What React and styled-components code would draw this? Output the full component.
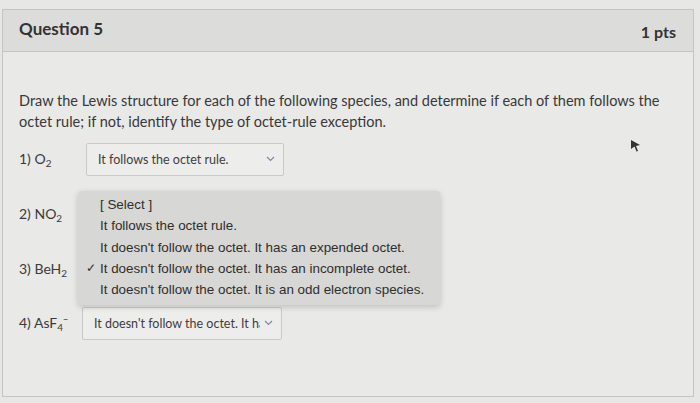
import React from "react";
import styled, { createGlobalStyle } from "styled-components";

const Global = createGlobalStyle`
  html, body {
    margin: 0;
    background: #e7e7e5;
    font-family: Lato, "Liberation Sans", sans-serif;
    color: #383838;
  }
`;

const Page = styled.div`
  width: 700px;
  height: 403px;
  padding: 9px 6px 0 2px;
  box-sizing: border-box;
  overflow: hidden;
  position: relative;
`;

const Card = styled.div`
  border: 1px solid #c4c4c2;
  background: #e9e9e7;
  height: 388px;
  box-sizing: border-box;
`;

const Header = styled.div`
  display: flex;
  justify-content: space-between;
  align-items: center;
  height: 41px;
  padding: 0 17px 0 16px;
  background: #dcdcda;
  border-bottom: 1px solid #c4c4c2;
`;

const Title = styled.h2`
  margin: -5px 0 0;
  font-size: 17px;
  font-weight: 700;
  color: #333;
`;

const Points = styled.span`
  font-size: 16px;
  font-weight: 700;
  color: #333;
  margin-top: 2px;
`;

const Body = styled.div`
  padding: 38px 16px 0;
`;

const Prompt = styled.p`
  margin: 0;
  font-size: 14.5px;
  line-height: 21px;
  color: #383838;
`;

const Row = styled.div`
  display: flex;
  align-items: center;
  height: ${(p) => p.h}px;
  position: relative;
`;

const Label = styled.span`
  width: ${(p) => p.w}px;
  flex: none;
  font-size: 14px;
  color: #3a3a3a;
  sub {
    font-size: 10px;
    vertical-align: -3px;
  }
  sup {
    font-size: 9px;
    vertical-align: 5px;
  }
`;

const Select = styled.div`
  width: ${(p) => p.w}px;
  height: 33px;
  box-sizing: border-box;
  border: 1px solid #c9c9c7;
  border-radius: 2px;
  background: #ededeb;
  display: flex;
  align-items: center;
  gap: 4px;
  padding: 0 8px 0 11px;
  font-size: 12.5px;
  color: #3d3d3d;
  span {
    flex: 1;
    white-space: nowrap;
    overflow: hidden;
  }
`;

const Chevron = () => (
  <svg width="9" height="6" viewBox="0 0 9 6">
    <path d="M1 1l3.5 3.5L8 1" fill="none" stroke="#7a8aa8" strokeWidth="1.2" />
  </svg>
);

const Menu = styled.ul`
  position: absolute;
  left: 59px;
  top: 5px;
  width: 362px;
  margin: 0;
  padding: 3px 0 5px;
  list-style: none;
  background: #d7d7d5;
  border-radius: 4px;
  box-shadow: 0 2px 6px rgba(0, 0, 0, 0.18);
  z-index: 2;
`;

const Option = styled.li`
  position: relative;
  padding-left: 22px;
  height: 21.3px;
  line-height: 21.3px;
  white-space: nowrap;
  font-family: "Liberation Sans", Arial, sans-serif;
  font-size: 13.4px;
  color: #2e2e2e;
`;

const Check = styled.span`
  position: absolute;
  left: 8px;
  top: 0;
  font-size: 12px;
`;

const Cursor = styled.svg`
  position: absolute;
  left: 630px;
  top: 139px;
`;

const options = [
  "[ Select ]",
  "It follows the octet rule.",
  "It doesn't follow the octet. It has an expended octet.",
  "It doesn't follow the octet. It has an incomplete octet.",
  "It doesn't follow the octet. It is an odd electron species.",
];

export default function App() {
  return (
    <Page>
      <Global />
      <Card>
        <Header>
          <Title>Question 5</Title>
          <Points>1 pts</Points>
        </Header>
        <Body>
          <Prompt>
            Draw the Lewis structure for each of the following species, and
            determine if each of them follows the octet rule; if not, identify
            the type of octet-rule exception.
          </Prompt>
          <Row h={54}>
            <Label w={67}>
              1) O<sub>2</sub>
            </Label>
            <Select w={198}>
              <span>It follows the octet rule.</span>
              <Chevron />
            </Select>
          </Row>
          <Row h={56}>
            <Label w={67}>
              2) NO<sub>2</sub>
            </Label>
            <Menu>
              {options.map((o, i) => (
                <Option key={o}>
                  {i === 3 && <Check>✓</Check>}
                  {o}
                </Option>
              ))}
            </Menu>
          </Row>
          <Row h={54}>
            <Label w={67}>
              3) BeH<sub>2</sub>
            </Label>
          </Row>
          <Row h={54}>
            <Label w={63}>
              4) AsF<sub>4</sub>
              <sup>−</sup>
            </Label>
            <Select w={200}>
              <span>It doesn't follow the octet. It has an incomplete octet.</span>
              <Chevron />
            </Select>
          </Row>
        </Body>
      </Card>
      <Cursor width="12" height="14" viewBox="0 0 12 14">
        <path d="M1 1l9 5-4 1 2 5-1.5 .6-2-5L1 10z" fill="#333" />
      </Cursor>
    </Page>
  );
}
